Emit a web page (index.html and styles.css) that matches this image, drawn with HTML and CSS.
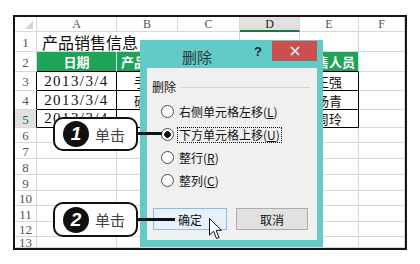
FILE: index.html
```html
<!DOCTYPE html>
<html lang="zh-CN">
<head>
    <meta charset="UTF-8">
    <title>删除</title>
    <link rel="stylesheet" href="styles.css">
</head>
<body>
<div class="sheet">
    <div class="grid">
        <div class="hd corner"></div>
        <div class="hd">A</div>
        <div class="hd">B</div>
        <div class="hd">C</div>
        <div class="hd sel">D</div>
        <div class="hd">E</div>
        <div class="hd">F</div>

        <div class="rh">1</div>
        <div class="c title">产品销售信息</div>
        <div class="c"></div>
        <div class="c"></div>
        <div class="c"></div>

        <div class="rh">2</div>
        <div class="c g">日期</div>
        <div class="c g">产品名称</div>
        <div class="c g"></div>
        <div class="c g"></div>
        <div class="c g">销售人员</div>
        <div class="c"></div>

        <div class="rh edge">3</div>
        <div class="c d num">2013/3/4</div>
        <div class="c d">手机</div>
        <div class="c d"></div>
        <div class="c d"></div>
        <div class="c d">王强</div>
        <div class="c"></div>

        <div class="rh edge">4</div>
        <div class="c d num">2013/3/4</div>
        <div class="c d">硬盘</div>
        <div class="c d"></div>
        <div class="c d"></div>
        <div class="c d">杨青</div>
        <div class="c"></div>

        <div class="rh edge sel">5</div>
        <div class="c d num">2013/3/4</div>
        <div class="c d"></div>
        <div class="c d"></div>
        <div class="c d"></div>
        <div class="c d">周玲</div>
        <div class="c"></div>

        <div class="rh">6</div><div class="c"></div><div class="c"></div><div class="c"></div><div class="c"></div><div class="c"></div><div class="c"></div>
        <div class="rh">7</div><div class="c"></div><div class="c"></div><div class="c"></div><div class="c"></div><div class="c"></div><div class="c"></div>
        <div class="rh">8</div><div class="c"></div><div class="c"></div><div class="c"></div><div class="c"></div><div class="c"></div><div class="c"></div>
        <div class="rh">9</div><div class="c"></div><div class="c"></div><div class="c"></div><div class="c"></div><div class="c"></div><div class="c"></div>
        <div class="rh">10</div><div class="c"></div><div class="c"></div><div class="c"></div><div class="c"></div><div class="c"></div><div class="c"></div>
        <div class="rh">11</div><div class="c"></div><div class="c"></div><div class="c"></div><div class="c"></div><div class="c"></div><div class="c"></div>
        <div class="rh">12</div><div class="c"></div><div class="c"></div><div class="c"></div><div class="c"></div><div class="c"></div><div class="c"></div>
        <div class="rh">13</div><div class="c"></div><div class="c"></div><div class="c"></div><div class="c"></div><div class="c"></div><div class="c"></div>
    </div>

    <!-- 删除对话框 -->
    <div class="dialog">
        <div class="bar">
            <span class="dtitle">删除</span>
            <span class="help">?</span>
            <span class="close">
                <svg width="10" height="10" viewBox="0 0 10 10">
                    <path d="M1 1L9 9M9 1L1 9" stroke="#fff" stroke-width="1.5" fill="none"/>
                </svg>
            </span>
        </div>
        <div class="body">
            <div class="group"><span>删除</span><i class="rule"></i></div>
            <div class="opts">
                <div class="opt"><span class="radio"></span><span>右侧单元格左移(<u>L</u>)</span></div>
                <div class="opt"><span class="radio on"></span><span class="focus">下方单元格上移(<u>U</u>)</span></div>
                <div class="opt"><span class="radio"></span><span>整行(<u>R</u>)</span></div>
                <div class="opt"><span class="radio"></span><span>整列(<u>C</u>)</span></div>
            </div>
            <div class="btns">
                <button class="btn ok">确定</button>
                <button class="btn">取消</button>
            </div>
        </div>
    </div>

    <!-- 步骤标注 -->
    <div class="callout c1"><span class="step">1</span><span class="say">单击</span></div>
    <div class="callout c2"><span class="step">2</span><span class="say">单击</span></div>

    <svg class="cursor" width="14" height="22" viewBox="0 0 14 22">
        <path d="M0.5 0.5L0.5 17L4.5 13.2L7.5 20.5L10 19.4L7.1 12.3L12.5 12.3Z" fill="#fff" stroke="#111" stroke-width="1"/>
    </svg>
</div>
</body>
</html>
```

FILE: styles.css
```css
body{
    margin: 0;
    background: #fff;
}
.sheet{
    position: relative;
    box-sizing: border-box;
    width: 394px;
    height: 235px;
    margin: 15px 0 0 13px;
    border: 2px solid #151515;
    overflow: hidden;
}
.grid{
    display: grid;
    grid-template-columns: 22px 80px 61px 62px 60px 59px 46px;
    grid-template-rows: 15px 20px 20px 19px 19px 18px 15px 16px 16px 16px 15px 16px 15px 11px;
}
.grid > div{
    box-sizing: border-box;
    border-right: 1px solid #d8d8d8;
    border-bottom: 1px solid #d8d8d8;
    display: flex;
    align-items: center;
    justify-content: center;
    white-space: nowrap;
    overflow: hidden;
    line-height: 1;
}
.hd{
    font-family: "Liberation Serif", serif;
    font-size: 12px;
    color: #555;
    background: #fff;
}
.hd.sel{
    background: #e1e1e1;
    border-bottom: 2px solid #217346 !important;
    color: #222;
}
.corner{
    position: relative;
}
.corner::after{
    content: "";
    position: absolute;
    right: 3px;
    bottom: 2px;
    border-left: 8px solid transparent;
    border-bottom: 8px solid #d2d2d2;
}
.rh{
    font-family: "Liberation Serif", serif;
    font-size: 13px;
    color: #555;
    padding-top: 1px;
}
.rh.edge{
    border-right-color: #000 !important;
}
.rh.sel{
    background: #e1e1e1;
    color: #217346;
}
.c{
    font-family: "Liberation Serif", "Noto Sans CJK SC", serif;
    font-size: 13px;
    color: #111;
}
.title{
    grid-column: span 3;
    justify-content: flex-start !important;
    padding-left: 5px;
    font-family: "Noto Sans CJK SC", sans-serif;
    font-size: 16px;
}
.g{
    background: #1fa25a;
    color: #fff;
    font-family: "Noto Sans CJK SC", sans-serif;
    font-weight: bold;
    border-right-color: #c9e9d6 !important;
    border-bottom-color: #000 !important;
}
.d{
    border-right-color: #000 !important;
    border-bottom-color: #000 !important;
    font-family: "Noto Sans CJK SC", sans-serif;
}
.num{
    font-family: "Liberation Serif", serif;
    font-size: 15px;
    letter-spacing: 1.4px;
}

/* 对话框 */
.dialog{
    position: absolute;
    left: 125px;
    top: 23px;
    width: 183px;
    height: 207px;
    background: #62cbc8;
    display: flex;
    flex-direction: column;
    font-family: "Noto Sans CJK SC", sans-serif;
    z-index: 2;
}
.bar{
    height: 28px;
    display: flex;
    align-items: flex-start;
}
.dtitle{
    margin: 8px 0 0 42px;
    font-size: 15px;
    line-height: 18px;
    color: #2e3a40;
}
.help{
    margin: 5px 0 0 42px;
    font-family: "Liberation Sans", sans-serif;
    font-weight: bold;
    font-size: 13px;
    line-height: 14px;
    color: #222;
}
.close{
    margin: 1px 6px 0 auto;
    width: 45px;
    height: 20px;
    background: #c9504f;
    display: flex;
    align-items: center;
    justify-content: center;
}
.body{
    flex: 1;
    margin: 0 6px 7px 7px;
    background: #f0f0f0;
    font-size: 12px;
    color: #111;
}
.group{
    display: flex;
    align-items: center;
    padding: 12px 7px 0 5px;
    line-height: 14px;
}
.rule{
    flex: 1;
    height: 1px;
    margin-left: 5px;
    background: #d6d6d6;
}
.opts{
    margin-top: 6px;
}
.opt{
    height: 23px;
    display: flex;
    align-items: center;
    padding-left: 14px;
    gap: 5px;
    line-height: 14px;
}
.radio{
    box-sizing: border-box;
    width: 13px;
    height: 13px;
    border: 1px solid #4a4a4a;
    border-radius: 50%;
    background: #fff;
}
.radio.on{
    background: radial-gradient(circle, #111 0 3px, #fff 3.6px);
}
.focus{
    border: 1px dotted #111;
    padding: 0 1px;
    margin-left: -2px;
}
.btns{
    display: flex;
    gap: 9px;
    margin-top: 16px;
    padding-left: 6px;
}
.btn{
    box-sizing: border-box;
    width: 72px;
    height: 22px;
    padding: 0;
    border: 1px solid #adadad;
    background: #e1e1e1;
    font-family: "Noto Sans CJK SC", sans-serif;
    font-size: 12px;
    color: #111;
}
.btn.ok{
    width: 74px;
    border-color: #8dbbe3;
    background: #e6f1fb;
}

/* 标注 */
.callout{
    position: absolute;
    left: 38px;
    box-sizing: border-box;
    width: 85px;
    border: 2px solid #111;
    border-radius: 10px;
    background: #fff;
    display: flex;
    align-items: center;
    gap: 6px;
    padding-left: 8px;
    z-index: 3;
}
.c1{
    top: 100px;
    height: 34px;
}
.c2{
    top: 185px;
    height: 35px;
}
.callout::after{
    content: "";
    position: absolute;
    left: 100%;
    top: 50%;
    height: 3px;
    margin-top: -2px;
    background: #111;
}
.c1::after{
    width: 26px;
}
.c2::after{
    width: 39px;
}
.step{
    width: 26px;
    height: 26px;
    border-radius: 50%;
    background: #111;
    color: #fff;
    font-family: "Liberation Sans", sans-serif;
    font-style: italic;
    font-weight: bold;
    font-size: 19px;
    display: flex;
    align-items: center;
    justify-content: center;
}
.say{
    font-family: "Noto Sans CJK SC", sans-serif;
    font-size: 15px;
    color: #444;
}
.cursor{
    position: absolute;
    left: 194px;
    top: 201px;
    z-index: 4;
}
```
